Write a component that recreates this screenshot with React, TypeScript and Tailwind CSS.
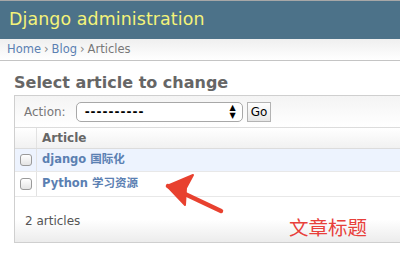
import React from 'react';

const font = "font-['Lucida_Grande','DejaVu_Sans','Noto_Sans_CJK_SC',sans-serif]";

function Checkbox() {
  return (
    <span className="block w-[12px] h-[12px] rounded-[3px] border border-[#9a9a9a] bg-gradient-to-b from-white to-[#e4e4e4]" />
  );
}

function Row({ title, shaded, h }: { title: string; shaded?: boolean; h: string }) {
  return (
    <div className={`flex ${h} border-b border-[#e8e8e8] ${shaded ? 'bg-[#edf3fe]' : 'bg-white'}`}>
      <div className="w-[22px] flex items-center justify-center border-r border-[#e2e2e2]">
        <Checkbox />
      </div>
      <a className="pl-[5px] flex items-center text-[11.5px] font-bold text-[#5b80b2]">{title}</a>
    </div>
  );
}

export default function App() {
  return (
    <div className={`relative w-[400px] h-[258px] overflow-hidden bg-white ${font}`}>
      <header className="h-[39px] border-t border-[#a7a7a7] bg-[#4c7289] flex items-center pl-[9px]">
        <h1 className="text-[17.4px] leading-none text-[#f4f379] tracking-[0.1px]">Django administration</h1>
      </header>
      <nav className="h-[22px] border-b border-[#c4c4c4] bg-gradient-to-b from-[#efefef] to-white flex items-center px-[7px] text-[11.5px]">
        <span className="text-[#5b80b2]">Home</span>
        <span className="text-[#888] px-[3px]">›</span>
        <span className="text-[#5b80b2]">Blog</span>
        <span className="text-[#888] px-[3px]">›</span>
        <span className="text-[#777]">Articles</span>
      </nav>
      <h1 className="pt-[11px] pl-[14px] leading-[22px] text-[16px] font-bold text-[#666]">Select article to change</h1>
      <div className="ml-[14px] mt-[1px] w-[420px] border border-[#cfcfcf]">
        <div className="h-[32px] flex items-center border-b border-[#dcdcdc] bg-gradient-to-b from-[#f4f4f4] to-white pl-[9px]">
          <span className="text-[12px] text-[#777]">Action:</span>
          <div className="ml-[10px] w-[167px] h-[20px] rounded-[5px] border border-[#a8a8a8] bg-white flex items-center pl-[8px] pr-[6px] text-[12px] text-black">
            <span className="flex-1 font-bold tracking-[1px]">----------</span>
            <span className="text-[8px] leading-[8px] flex flex-col items-center">
              <span>▲</span>
              <span>▼</span>
            </span>
          </div>
          <button className="ml-[4px] h-[20px] px-[3px] border border-[#b3b3b3] bg-gradient-to-b from-white to-[#e6e6e6] text-[12px] text-black leading-none">Go</button>
        </div>
        <div className="h-[21px] flex border-b border-[#dcdcdc] bg-gradient-to-b from-white to-[#f1f1f1]">
          <div className="w-[22px] border-r border-[#e2e2e2]" />
          <span className="pl-[5px] flex items-center text-[12px] font-bold text-[#666]">Article</span>
        </div>
        <Row title="django 国际化" shaded h="h-[23px]" />
        <Row title="Python 学习资源" h="h-[25px]" />
        <div className="h-[45px] flex items-center pl-[10px] pt-[2px] text-[12px] text-[#555] bg-gradient-to-b from-white via-white to-[#ececec]">
          2 articles
        </div>
      </div>
      <svg className="absolute left-[160px] top-[170px]" width="75" height="50" viewBox="0 0 75 50">
        <g fill="#e8412f" stroke="#e8412f" strokeLinecap="round" strokeLinejoin="round">
          <path d="M8 16 L61 41" strokeWidth="4.5" fill="none" />
          <path d="M7 16 L33 5 L26 18 L25 35 Z" strokeWidth="2" />
        </g>
      </svg>
      <span className="absolute left-[289px] top-[214px] text-[19.5px] leading-[26px] text-[#e8403b] font-['Noto_Sans_CJK_SC',sans-serif]">文章标题</span>
    </div>
  );
}
